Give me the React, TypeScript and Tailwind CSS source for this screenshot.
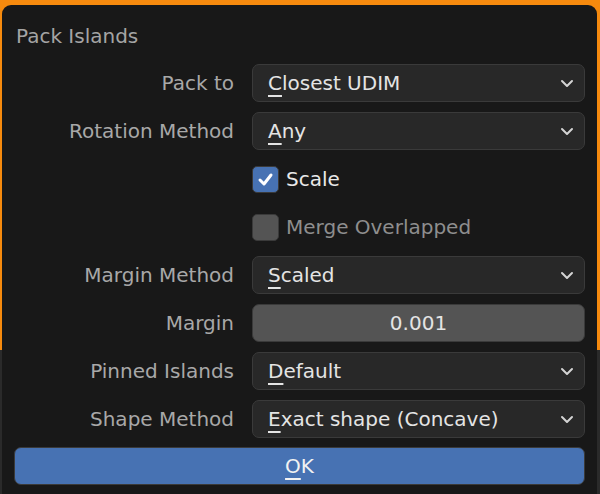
import React from "react";

const font = { fontFamily: '"DejaVu Sans", "Liberation Sans", sans-serif' };

function Chevron() {
  return (
    <svg width="14" height="10" viewBox="0 0 14 10" className="shrink-0">
      <path d="M2 3 L7 8 L12 3" fill="none" stroke="#d4d4d4" strokeWidth="2" strokeLinecap="round" strokeLinejoin="round" />
    </svg>
  );
}

function Mn({ text }: { text: string }) {
  return (
    <>
      <span className="underline decoration-[1.5px] underline-offset-[5px]">{text[0]}</span>
      {text.slice(1)}
    </>
  );
}

function Dropdown({ value }: { value: string }) {
  return (
    <div className="h-[38px] w-full rounded-[7px] border border-[#3a3a3a] bg-[#282828] flex items-center pl-[15px] pr-[10px] text-[#e4e4e4]">
      <span className="flex-1 whitespace-nowrap"><Mn text={value} /></span>
      <Chevron />
    </div>
  );
}

function Label({ text }: { text: string }) {
  return <div className="text-right text-[#a8a8a8] whitespace-nowrap">{text}</div>;
}

function Row({ children }: { children: React.ReactNode }) {
  return <div className="h-[48px] grid grid-cols-[220px_333px] gap-x-[18px] items-center">{children}</div>;
}

function Check({ checked, label }: { checked: boolean; label: string }) {
  return (
    <div className="flex items-center gap-[7px]">
      {checked ? (
        <div className="w-[27px] h-[27px] rounded-[5px] bg-[#4772b3] border border-[#3a3a3a] flex items-center justify-center">
          <svg width="19" height="19" viewBox="0 0 19 19">
            <path d="M4 10 L8 14 L15 5" fill="none" stroke="#ffffff" strokeWidth="3" strokeLinecap="round" strokeLinejoin="round" />
          </svg>
        </div>
      ) : (
        <div className="w-[27px] h-[27px] rounded-[5px] bg-[#545454] border border-[#3a3a3a]" />
      )}
      <span className={checked ? "text-[#e8e8e8]" : "text-[#8e8e8e]"}>{label}</span>
    </div>
  );
}

export default function App() {
  return (
    <div
      className="w-[600px] h-[494px] overflow-hidden bg-[linear-gradient(to_bottom,#f68a0e_350px,#2a2a2a_350px)] pt-[5px] px-[2px] text-[20px] leading-none"
      style={font}
    >
      <div className="w-[595px] h-[500px] rounded-[9px] bg-[#181818] px-[12px] pt-[10px]">
        <div className="h-[40px] flex items-center pl-[2px] pt-[1px] text-[#a4a4a4]">Pack Islands</div>
        <div className="mt-[4px] flex flex-col">
          <Row>
            <Label text="Pack to" />
            <Dropdown value="Closest UDIM" />
          </Row>
          <Row>
            <Label text="Rotation Method" />
            <Dropdown value="Any" />
          </Row>
          <Row>
            <div />
            <Check checked label="Scale" />
          </Row>
          <Row>
            <div />
            <Check checked={false} label="Merge Overlapped" />
          </Row>
          <Row>
            <Label text="Margin Method" />
            <Dropdown value="Scaled" />
          </Row>
          <Row>
            <Label text="Margin" />
            <div className="h-[38px] w-full rounded-[7px] border border-[#3a3a3a] bg-[#545454] flex items-center justify-center text-[#e4e4e4]">
              0.001
            </div>
          </Row>
          <Row>
            <Label text="Pinned Islands" />
            <Dropdown value="Default" />
          </Row>
          <Row>
            <Label text="Shape Method" />
            <Dropdown value="Exact shape (Concave)" />
          </Row>
        </div>
        <div className="mt-[4px] h-[38px] w-[571px] rounded-[7px] border border-[#3a3a3a] bg-[#4772b3] flex items-center justify-center text-[#f2f2f2]">
          <Mn text="OK" />
        </div>
      </div>
    </div>
  );
}
